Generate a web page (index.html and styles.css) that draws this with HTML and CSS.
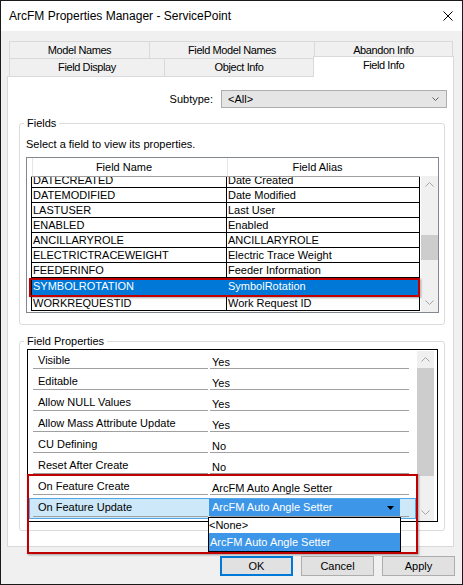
FILE: index.html
```html
<!DOCTYPE html>
<html>
<head>
<meta charset="utf-8">
<title>ArcFM Properties Manager</title>
<link rel="stylesheet" href="styles.css">
</head>
<body>
<div class="window">
  <div class="titlebar">
    <span class="title">ArcFM Properties Manager - ServicePoint</span>
    <svg class="close" width="10" height="10" viewBox="0 0 10 10"><path d="M0.5 0.5 L9.5 9.5 M9.5 0.5 L0.5 9.5" stroke="#000" stroke-width="1" fill="none"/></svg>
  </div>
  <div class="client">
    <div class="tabs">
      <div class="tabrow r1">
        <div class="tab w-mn">Model Names</div>
        <div class="tab w-fmn">Field Model Names</div>
        <div class="tab w-ab last">Abandon Info</div>
      </div>
      <div class="tabrow r2">
        <div class="tab w-fd">Field Display</div>
        <div class="tab w-oi">Object Info</div>
        <div class="tab w-fi active">Field Info</div>
      </div>
    </div>
    <div class="panel">
      <div class="subrow">
        <span>Subtype:</span>
        <div class="combo">
          <span>&lt;All&gt;</span>
          <svg width="7" height="4" viewBox="0 0 7 4"><path d="M0.5 0.5 L3.5 3.5 L6.5 0.5" fill="none" stroke="#606060" stroke-width="1"/></svg>
        </div>
      </div>
      <fieldset class="group g1">
        <legend>Fields</legend>
        <div class="hint">Select a field to view its properties.</div>
        <div class="fgrid">
          <div class="fhead">
            <div class="hstub"></div>
            <div class="hcell hc1">Field Name</div>
            <div class="hcell hc2">Field Alias</div>
            <div class="hfill"></div>
          </div>
          <div class="fbody">
            <div class="rstub"></div>
            <div class="rview">
              <div class="rows">
                <div class="frow"><div class="fc1">DATECREATED</div><div class="fc2">Date Created</div></div>
                <div class="frow"><div class="fc1">DATEMODIFIED</div><div class="fc2">Date Modified</div></div>
                <div class="frow"><div class="fc1">LASTUSER</div><div class="fc2">Last User</div></div>
                <div class="frow"><div class="fc1">ENABLED</div><div class="fc2">Enabled</div></div>
                <div class="frow"><div class="fc1">ANCILLARYROLE</div><div class="fc2">ANCILLARYROLE</div></div>
                <div class="frow"><div class="fc1">ELECTRICTRACEWEIGHT</div><div class="fc2">Electric Trace Weight</div></div>
                <div class="frow"><div class="fc1">FEEDERINFO</div><div class="fc2">Feeder Information</div></div>
                <div class="frow sel"><div class="fc1">SYMBOLROTATION</div><div class="fc2">SymbolRotation</div></div>
                <div class="frow"><div class="fc1">WORKREQUESTID</div><div class="fc2">Work Request ID</div></div>
              </div>
            </div>
            <div class="vscroll v1">
              <div class="sbtn"><svg width="9" height="5" viewBox="0 0 9 5"><path d="M0.5 4.5 L4.5 0.5 L8.5 4.5" fill="none" stroke="#a6a6a6" stroke-width="1"/></svg></div>
              <div class="track tr-a"></div>
              <div class="thumb"></div>
              <div class="track tr-b"></div>
              <div class="sbtn"><svg width="9" height="5" viewBox="0 0 9 5"><path d="M0.5 0.5 L4.5 4.5 L8.5 0.5" fill="none" stroke="#a6a6a6" stroke-width="1"/></svg></div>
            </div>
          </div>
        </div>
      </fieldset>
      <fieldset class="group g2">
        <legend>Field Properties</legend>
        <div class="pgrid">
          <div class="prows">
            <div class="prow"><div class="pl">Visible</div><div class="pv">Yes</div></div>
            <div class="prow"><div class="pl">Editable</div><div class="pv">Yes</div></div>
            <div class="prow"><div class="pl">Allow NULL Values</div><div class="pv">Yes</div></div>
            <div class="prow"><div class="pl">Allow Mass Attribute Update</div><div class="pv">Yes</div></div>
            <div class="prow"><div class="pl">CU Defining</div><div class="pv">No</div></div>
            <div class="prow"><div class="pl">Reset After Create</div><div class="pv">No</div></div>
            <div class="prow"><div class="pl">On Feature Create</div><div class="pv">ArcFM Auto Angle Setter</div></div>
            <div class="prow sel">
              <div class="pl">On Feature Update</div>
              <div class="pv">
                <div class="pcombo">
                  <span>ArcFM Auto Angle Setter</span>
                  <svg width="7" height="4" viewBox="0 0 7 4"><path d="M0 0 H7 L3.5 4 Z" fill="#000"/></svg>
                </div>
              </div>
            </div>
          </div>
          <div class="vscroll v2">
            <div class="sbtn"><svg width="9" height="5" viewBox="0 0 9 5"><path d="M0.5 4.5 L4.5 0.5 L8.5 4.5" fill="none" stroke="#a6a6a6" stroke-width="1"/></svg></div>
            <div class="thumb"></div>
            <div class="track tr-b"></div>
            <div class="sbtn"><svg width="9" height="5" viewBox="0 0 9 5"><path d="M0.5 0.5 L4.5 4.5 L8.5 0.5" fill="none" stroke="#a6a6a6" stroke-width="1"/></svg></div>
          </div>
        </div>
      </fieldset>
    </div>
    <div class="buttons">
      <div class="btn default">OK</div>
      <div class="btn">Cancel</div>
      <div class="btn">Apply</div>
    </div>
  </div>

  <div class="droplist">
    <div class="ditem d1">&lt;None&gt;</div>
    <div class="ditem d2">ArcFM Auto Angle Setter</div>
  </div>
  <div class="redbox rb1"></div>
  <div class="redbox rb2"></div>
</div>
</body>
</html>
```

FILE: styles.css
```css
* { box-sizing: border-box; }
html, body { margin: 0; padding: 0; }
body {
  font-family: "Liberation Sans", Arial, sans-serif;
  font-size: 11px;
  color: #000;
  background: #fff;
}
.window {
  position: relative;
  width: 463px;
  height: 585px;
  border: 1px solid #1a1a1a;
  background: #f0f0f0;
  overflow: hidden;
}
.titlebar {
  height: 30px;
  background: #fff;
  display: flex;
  align-items: center;
  justify-content: space-between;
  padding: 0 9px 0 8px;
}
.title { font-size: 12px; }
.client { padding: 10px 0 0 6px; }

/* tabs */
.tabs { margin-left: 2px; }
.tabrow { display: flex; }
.tab {
  border-top: 1px solid #d9d9d9;
  border-left: 1px solid #d9d9d9;
  text-align: center;
  letter-spacing: -0.4px;
  background: #f0f0f0;
  white-space: nowrap;
}
.r1 .tab { height: 17px; line-height: 16px; }
.r2 { height: 18px; align-items: flex-start; }
.r2 .tab { height: 18px; line-height: 17px; }
.tab.last { border-right: 1px solid #d9d9d9; }
.tab.active {
  background: #fff;
  height: 21px;
  margin-top: -2px;
  position: relative;
  z-index: 2;
  border-right: 1px solid #d9d9d9;
}
.w-mn { width: 140px; }
.w-fmn { width: 165px; }
.w-ab { width: 139px; }
.w-fd { width: 155px; }
.w-oi { width: 149px; }
.w-fi { width: 141px; }

/* panel */
.panel {
  width: 447px;
  height: 471px;
  background: #fff;
  border: 1px solid #d9d9d9;
}
.subrow {
  display: flex;
  justify-content: flex-end;
  align-items: center;
  gap: 8px;
  margin-top: 13px;
  padding-right: 6px;
  height: 18px;
}
.combo {
  width: 226px;
  height: 18px;
  border: 1px solid #adadad;
  background: #e5e5e5;
  display: flex;
  align-items: center;
  justify-content: space-between;
  padding: 0 7px 0 6px;
}

/* group boxes */
.group {
  width: 426px;
  margin: 8px 0 0 11px;
  padding: 0;
  border: 1px solid #dcdcdc;
  border-radius: 3px;
  min-width: 0;
}
.group legend {
  margin-left: 4px;
  padding: 0 3px;
  line-height: 14px;
  font-size: 11px;
}
.g1 { padding-bottom: 11px; }
.g2 { margin-top: 9px; padding-bottom: 8px; }
.hint { margin: 7px 0 0 6px; line-height: 14px; }

/* fields grid */
.fgrid {
  width: 413px;
  height: 156px;
  border: 1px solid #828790;
  background: #fff;
  margin: 6px 0 0 6px;
}
.fhead { display: flex; height: 18px; line-height: 18px; }
.hstub { width: 6px; border-right: 1px solid #e5e5e5; }
.hcell { text-align: center; white-space: nowrap; }
.hc1 { width: 195px; border-right: 1px solid #e5e5e5; padding-right: 12px; }
.hc2 { width: 192px; padding-right: 13px; }
.hfill { width: 18px; }
.fbody { display: flex; height: 136px; }
.rstub { width: 4px; }
.rview {
  width: 389px;
  height: 136px;
  border-top: 1px solid #a0a0a0;
  overflow: hidden;
  flex: none;
}
.rows { margin-top: -4px; }
.frow {
  display: flex;
  height: 15px;
  line-height: 14px;
  border: 1px solid #000;
  border-top: none;
  white-space: nowrap;
}
.fc1 { width: 195px; border-right: 1px solid #000; padding-left: 1px; overflow: hidden; }
.fc2 { width: 192px; padding-left: 1px; overflow: hidden; }
.frow.sel {
  height: 18px;
  line-height: 17px;
  background: #0078d7;
  color: #fff;
}
.frow.sel .fc1 { border-right-color: #0078d7; }

/* scrollbars */
.vscroll {
  display: flex;
  flex-direction: column;
  width: 17px;
  background: #f0f0f0;
  flex: none;
}
.sbtn { height: 17px; display: flex; align-items: center; justify-content: center; flex: none; }
.sbtn svg { display: block; }
.thumb { background: #cdcdcd; flex: none; }
.track { flex: none; }
.v1 { height: 136px; margin-left: 1px; }
.v1 .tr-a { height: 42px; }
.v1 .thumb { height: 25px; }
.v1 .tr-b { height: 34px; }
.v2 { height: 170px; margin-top: 1px; }
.v2 .thumb { height: 108px; }
.v2 .tr-b { height: 28px; }

/* property grid */
.pgrid {
  display: flex;
  align-items: flex-start;
  width: 411px;
  height: 173px;
  border: 1px solid #000;
  background: #fff;
  margin: 1px 0 0 7px;
  overflow: hidden;
}
.prows { width: 389px; margin-top: -2px; flex: none; }
.prow { display: flex; height: 21px; white-space: nowrap; }
.pl {
  margin-left: 5px;
  width: 175px;
  height: 21px;
  border-bottom: 1px solid #a0a0a0;
  padding: 5px 0 0 5px;
  line-height: 14px;
}
.pv {
  margin-left: 2px;
  width: 199px;
  height: 21px;
  border-bottom: 1px solid #a0a0a0;
  padding: 8px 0 0 2px;
  line-height: 12px;
}
.prow.sel {
  margin-top: 3px;
  margin-left: 1px;
  width: 387px;
  height: 21px;
  border: 1px solid #51a6e6;
  background: #cde8f8;
}
.prow.sel .pl { margin-left: 3px; height: 18px; padding-top: 1px; }
.prow.sel .pv { height: 18px; padding: 0; }
.pcombo {
  margin-left: -1px;
  width: 191px;
  height: 17px;
  line-height: 17px;
  background: #3e96e8;
  color: #fff;
  padding: 0 6px 0 3px;
  display: flex;
  align-items: center;
  justify-content: space-between;
}

/* buttons */
.buttons {
  display: flex;
  justify-content: flex-end;
  gap: 8px;
  margin-top: 9px;
  padding-right: 7px;
}
.btn {
  width: 73px;
  height: 20px;
  border: 1px solid #adadad;
  background: #e1e1e1;
  display: flex;
  align-items: center;
  justify-content: center;
}
.btn.default { border: 2px solid #0078d7; }

/* overlays */
.droplist {
  position: absolute;
  left: 207px;
  top: 516px;
  width: 193px;
  height: 35px;
  border: 1px solid #000;
  background: #fff;
  z-index: 5;
}
.ditem { white-space: nowrap; }
.d1 { height: 15px; line-height: 15px; }
.d2 { height: 18px; line-height: 18px; background: #3e96e8; color: #fff; padding-left: 1px; }
.redbox {
  position: absolute;
  border: 2px solid #c00000;
  box-shadow: 1px 1px 2px rgba(0, 0, 0, 0.35);
  z-index: 6;
}
.rb1 { left: 28px; top: 277px; width: 391px; height: 19px; }
.rb2 { left: 26px; top: 473px; width: 391px; height: 80px; }
```
